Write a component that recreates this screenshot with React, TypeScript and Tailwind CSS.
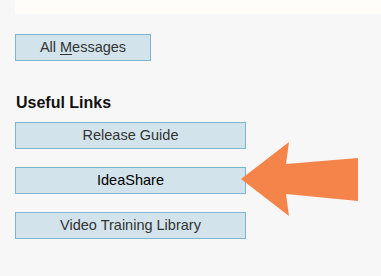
export default function App() {
  const btn =
    "h-[27px] border border-[#7db5ce] bg-[#d2e3eb] text-[14.5px] text-[#333] flex items-center justify-center leading-none";
  return (
    <div className="relative w-[381px] h-[276px] overflow-hidden bg-[#f7f7f7] font-['Liberation_Sans',Arial,sans-serif]">
      <div className="ml-[15px] h-[14px] bg-[#fffdfa]" />
      <div className="pl-[15px] pt-[20px]">
        <button className={`${btn} w-[136px]`}>
          All <span className="underline underline-offset-2 ml-1">M</span>essages
        </button>
        <h3 className="mt-[30px] text-[16px] leading-[24px] font-bold text-[#111] pl-[1px]">Useful Links</h3>
        <div className="mt-[7px] flex flex-col gap-[18px] w-[231px]">
          <button className={btn}>Release Guide</button>
          <button className={`${btn} text-black`}>IdeaShare</button>
          <button className={btn}>Video Training Library</button>
        </div>
      </div>
      <svg className="absolute left-0 top-0" width="381" height="276" viewBox="0 0 381 276">
        <polygon
          points="241,179 289,142 286,164 358,158 358,201 286,194 289,216"
          fill="#f5844a"
        />
      </svg>
    </div>
  );
}
